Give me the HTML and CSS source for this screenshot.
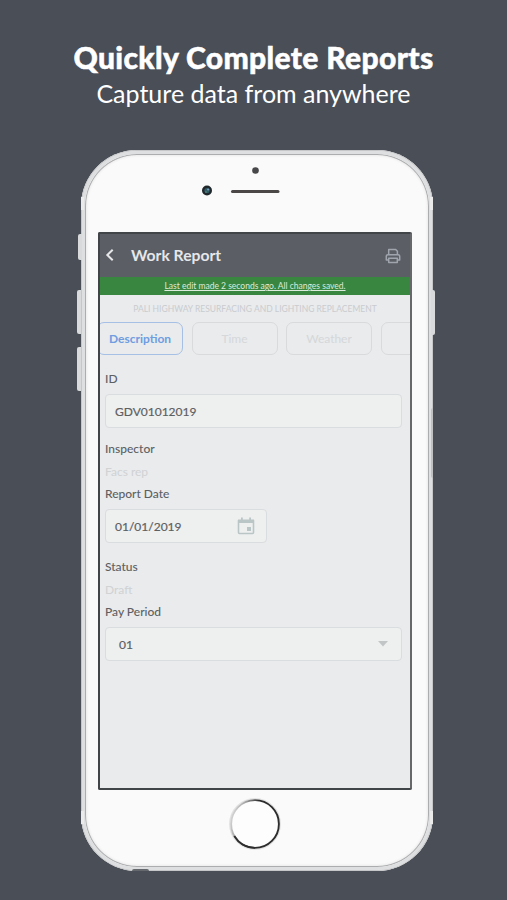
FILE: index.html
```html
<!DOCTYPE html>
<html lang="en">
<head>
    <meta charset="UTF-8">
    <title>Quickly Complete Reports</title>
    <link rel="stylesheet" href="styles.css">
</head>
<body>
    <header class="promo">
        <h1>Quickly Complete Reports</h1>
        <p>Capture data from anywhere</p>
    </header>

    <div class="phone">
        <span class="side-btn mute"></span>
        <span class="side-btn volume-up"></span>
        <span class="side-btn volume-down"></span>
        <span class="side-btn power"></span>
        <span class="side-btn sim"></span>
        <span class="band top-left"></span>
        <span class="band top-right"></span>
        <span class="band bottom-left"></span>
        <span class="band bottom-right"></span>

        <div class="face">
            <svg class="sensors" width="80" height="36" viewBox="0 0 80 36">
                <circle cx="55.500" cy="8.500" r="3.300" fill="#474749"/>
                <circle cx="7" cy="28.500" r="5" fill="#20282c"/>
                <circle cx="7" cy="28.500" r="2.600" fill="#315c68"/>
                <circle cx="8.200" cy="27.500" r="1.100" fill="#7a9fc0"/>
                <circle cx="6" cy="30" r="0.900" fill="#49817a"/>
                <path d="M32.500 29.500H78" stroke="#4b4747" stroke-width="3" stroke-linecap="round"/>
            </svg>

            <div class="screen">
                <div class="app-bar">
                    <svg class="back" width="10" height="14" viewBox="0 0 10 14">
                        <path d="M7.700 1.700L2.300 7l5.400 5.300" fill="none" stroke="#e6e7e8" stroke-width="2"/>
                    </svg>
                    <span class="app-title">Work Report</span>
                    <svg class="print" width="16" height="16" viewBox="0 0 16 16" fill="none" stroke="#9fa4ad" stroke-width="1.500" stroke-linejoin="round">
                        <path d="M3.700 6.500V1.500h7l1.700 1.700v3.300"/>
                        <path d="M3.500 12H1.300V8.300q0-1.600 1.600-1.600h10.200q1.600 0 1.600 1.600V12h-2.200"/>
                        <path d="M3.700 10.300h8.600v4.200H3.700z"/>
                    </svg>
                </div>
                <div class="save-bar">Last edit made 2 seconds ago. All changes saved.</div>
                <div class="project">PALI HIGHWAY RESURFACING AND LIGHTING REPLACEMENT</div>
                <div class="tabs">
                    <div class="tab active">Description</div>
                    <div class="tab">Time</div>
                    <div class="tab">Weather</div>
                    <div class="tab"></div>
                </div>

                <div class="form">
                    <div class="label">ID</div>
                    <div class="field id-field">GDV01012019</div>
                    <div class="label">Inspector</div>
                    <div class="value">Facs rep</div>
                    <div class="label">Report Date</div>
                    <div class="field date">
                        <span>01/01/2019</span>
                        <svg width="18" height="18" viewBox="0 0 18 18">
                            <path d="M1.500 4h15v11.500q0 1-1 1h-13q-1 0-1-1z" fill="none" stroke="#bac5c6" stroke-width="1.600"/>
                            <path d="M1 2.500h16V6H1zM4 .5h1.800v3H4zM12.200.5H14v3h-1.800zM10 10h4v4h-4z" fill="#bac5c6"/>
                        </svg>
                    </div>
                    <div class="label">Status</div>
                    <div class="value">Draft</div>
                    <div class="label">Pay Period</div>
                    <div class="field select">
                        <span>01</span>
                        <svg width="10" height="6" viewBox="0 0 10 6">
                            <path d="M0 0h10L5 5.500z" fill="#c2c5c6"/>
                        </svg>
                    </div>
                </div>
            </div>

            <svg class="home" width="54" height="54" viewBox="0 0 54 54">
                <defs>
                    <linearGradient id="ring" x1="0" y1="0.300" x2="1" y2="0.600">
                        <stop offset="0" stop-color="#d8d8d8"/>
                        <stop offset="0.200" stop-color="#a8a8a8"/>
                        <stop offset="0.450" stop-color="#2d2d2d"/>
                        <stop offset="1" stop-color="#2d2d2d"/>
                    </linearGradient>
                </defs>
                <circle cx="27" cy="27" r="25.200" fill="#fdfdfd" stroke="#e2e2e2" stroke-width="1.500"/>
                <circle cx="27" cy="27" r="23.900" fill="none" stroke="url(#ring)" stroke-width="1.900"/>
                <path d="M6.300 39A23.900 23.900 0 0 0 27 50.900" fill="none" stroke="#2d2d2d" stroke-width="1.900"/>
            </svg>
        </div>
        <span class="notch"></span>
    </div>
</body>
</html>
```

FILE: styles.css
```css
* {
    box-sizing: border-box;
}
body {
    margin: 0;
    height: 900px;
    overflow: hidden;
    background: #494e57;
    font-family: Lato, "Liberation Sans", sans-serif;
    display: flex;
    flex-direction: column;
}
.promo {
    height: 150px;
    padding-top: 39px;
    color: #fff;
    text-align: center;
    white-space: nowrap;
}
.promo h1 {
    margin: 0;
    font-size: 30px;
    font-weight: 900;
    letter-spacing: 0.35px;
    line-height: 37px;
    -webkit-text-stroke: 0.5px #fff;
}
.promo p {
    margin: 0;
    font-size: 25px;
    line-height: 34px;
}
.phone {
    position: relative;
    width: 352px;
    height: 721px;
    margin-left: 81px;
    padding: 1px;
    border-radius: 56px;
    background: #b0b1b3;
    box-shadow: inset 0 0 0 1px #c6c7c9, inset 0 0 0 3px #e5e5e6;
}
.face {
    height: 100%;
    padding-right: 4px;
    border: 3px solid #dedfe0;
    border-radius: 55px;
    background: #fafafa;
    box-shadow: inset 0 0 0 1px #acadaf, inset 0 0 3px 1px #dcdcdc;
    display: flex;
    flex-direction: column;
    align-items: center;
}
.sensors {
    margin: 8px 31px 34px 0;
    flex: none;
}
.screen {
    width: 314px;
    height: 558px;
    flex: none;
    border: 2px solid #424547;
    border-right-color: #66686a;
    border-radius: 2px;
    background: #e9ebed;
    overflow: hidden;
}
.app-bar {
    height: 43px;
    padding: 1px 9px 0 5px;
    background: #5b5e65;
    display: flex;
    align-items: center;
}
.back {
    margin-top: -3px;
}
.app-title {
    flex: 1;
    margin-left: 16px;
    padding-bottom: 2px;
    color: #e6e7e9;
    font-size: 15.7px;
    font-weight: 700;
}
.save-bar {
    height: 18px;
    background: #398641;
    color: #dcebdd;
    font-size: 8.5px;
    line-height: 19px;
    text-align: center;
    text-decoration: underline;
    white-space: nowrap;
}
.project {
    height: 27px;
    padding-top: 2px;
    color: #c9cccf;
    font-size: 8.5px;
    line-height: 24px;
    text-align: center;
    white-space: nowrap;
}
.tabs {
    display: flex;
    gap: 8.5px;
    margin-left: -3px;
}
.tab {
    width: 86px;
    height: 33px;
    flex: none;
    border: 1.5px solid #d8dadc;
    border-radius: 7px;
    color: #d5d7d9;
    font-size: 12px;
    line-height: 31px;
    text-align: center;
}
.tab.active {
    border-color: #a5bfe5;
    color: #6e9de1;
    font-weight: 700;
}
.form {
    padding: 14px 8px 0 5px;
    color: #5d6062;
    font-size: 12px;
}
.label {
    height: 20px;
    line-height: 20px;
    font-weight: 500;
}
.value {
    height: 25px;
    line-height: 25px;
    color: #d0d2d4;
}
.field {
    height: 34px;
    margin: 5px 0 11px;
    padding: 0 9px;
    border: 1.5px solid #d9dddf;
    border-radius: 4px;
    background: #eeefef;
    display: flex;
    align-items: center;
    justify-content: space-between;
    -webkit-text-stroke: 0.2px #5d6062;
}
.date {
    width: 162px;
    margin-bottom: 14px;
    padding-right: 11px;
}
.select {
    padding: 0 13px;
}
.home {
    flex: none;
    margin-top: 7px;
}

/* hardware buttons on the phone's edges */
.side-btn {
    position: absolute;
    left: -4px;
    width: 4px;
    border-radius: 2px 0 0 2px;
    background: #d9dadb;
}
.mute {
    top: 84px;
    left: -3px;
    height: 26px;
}
.volume-up {
    top: 140px;
    height: 44px;
}
.volume-down {
    top: 197px;
    height: 44px;
}
.power {
    top: 140px;
    left: 350px;
    height: 45px;
    border-radius: 0 2px 2px 0;
}
.sim {
    top: 258px;
    left: 350px;
    width: 2px;
    height: 70px;
    background: #bfc1c2;
}
.band {
    position: absolute;
    width: 3px;
    height: 13px;
    background: #ebebeb;
}
.top-left {
    top: 47px;
    left: 0;
}
.top-right {
    top: 47px;
    right: 0;
}
.bottom-left {
    bottom: 47px;
    left: 0;
}
.bottom-right {
    bottom: 47px;
    right: 0;
}
.notch {
    position: absolute;
    left: 51px;
    bottom: 0;
    width: 17px;
    height: 2px;
    border-radius: 3px 3px 0 0;
    background: #65686d;
}
```
